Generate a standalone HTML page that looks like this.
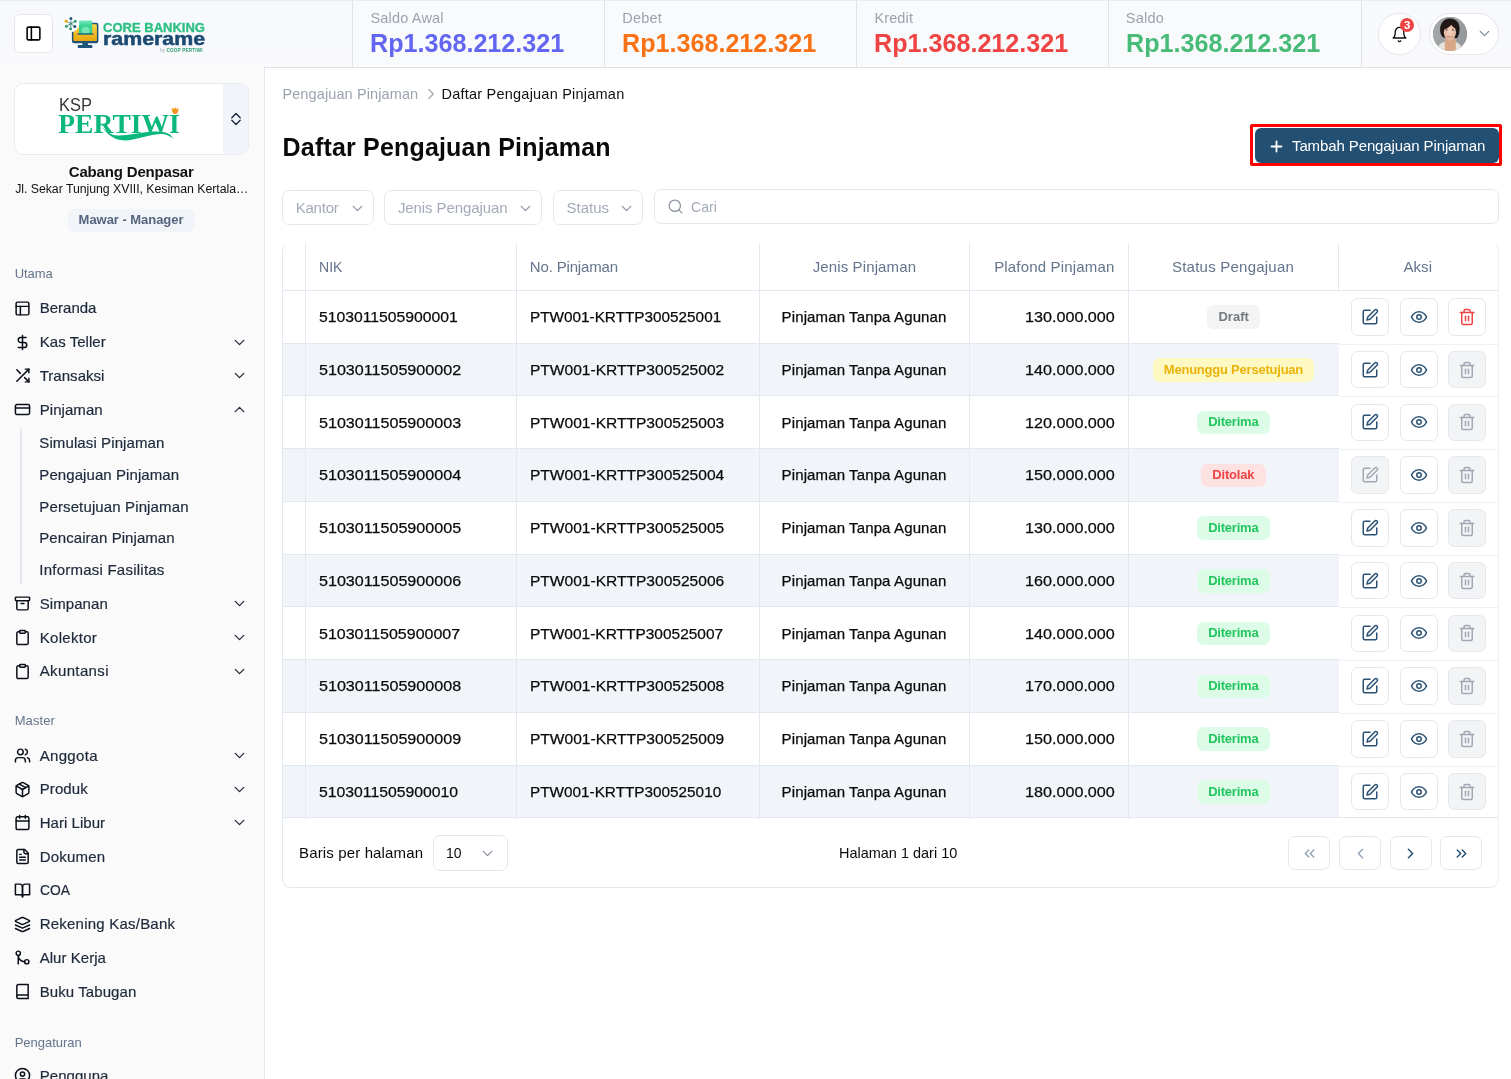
<!DOCTYPE html><html lang="id"><head><meta charset="utf-8"><title>Daftar Pengajuan Pinjaman</title><style>
*{box-sizing:border-box;margin:0;padding:0}
html,body{width:1511px;height:1079px;overflow:hidden}
body{background:#fafafa;font-family:"Liberation Sans",sans-serif;color:#1e293b;position:relative;font-size:15px}
#root{position:absolute;left:0;top:0;width:1511px;height:1079px;overflow:hidden;will-change:transform}
.ic{display:block;flex:none}
.abs{position:absolute}
.t{white-space:nowrap}
.topline{left:0;top:0;width:1511px;height:1px;background:#ebecef}
.hdrbg{left:0;top:0;width:1511px;height:90px;background:linear-gradient(#f8f9fc 0,#f8f9fc 45px,#fafafa 90px)}
.toggle{left:14px;top:14px;width:38.5px;height:38.5px;border:1px solid #e5e7eb;border-radius:5.500px;background:#fff;display:flex;align-items:center;justify-content:center;color:#000}
.stat{top:0;height:67.5px;width:253px;border-left:1px solid #dfe3e8;background:#f9fafb}
.stat.last{border-right:1px solid #dfe3e8}
.bell{left:1378.400px;top:12.600px;width:42.400px;height:42.400px;border-radius:50%;background:#fff;border:1px solid #e5e7eb;color:#111}
.badge3{left:20.600px;top:4.500px;width:14.200px;height:14.200px;border-radius:50%;background:#ef4444;color:#fff;font-size:11.500px;font-weight:700;text-align:center;line-height:14px}
.user{left:1429.400px;top:12.600px;width:69.500px;height:42.400px;border-radius:22px;background:#fff;border:1px solid #e5e7eb}
.avatar{left:3.100px;top:3.800px;width:34px;height:34px;border-radius:50%;overflow:hidden;background:#8e8e8e}
.brand{left:13.500px;top:83px;width:235.500px;height:71.500px;border:1px solid #e8ebf0;border-radius:9px;background:#fff;overflow:hidden}
.brand .sw{position:absolute;right:0;top:0;width:25.500px;height:100%;background:#f1f5f9}
.role{left:68px;top:209px;width:127px;height:22.500px;border-radius:6px;background:#f1f5f9}
.subline{left:20px;top:428px;width:2px;height:156px;background:#e5e8ee}
.main{left:264px;top:67px;width:1247px;height:1012px;background:#fff;border-left:1px solid #e2e8f0;border-top:1px solid #dfe3e8}

.addwrap{left:1250px;top:124px;width:252px;height:42px;border:3px solid #fe0000;border-radius:2px}
.addbtn{left:1255px;top:128.200px;width:244.200px;height:35px;background:#234f72;border-radius:6px;color:#fff}
.flt{top:189.200px;height:35.300px;border:1px solid #e5e7eb;border-radius:7px;background:#fff}
.tbl{left:282px;top:242px;width:1217px;height:646px;border:1px solid #e2e8f0;border-top-color:transparent;border-right-color:#eceff3;border-radius:9px;background:#fff;overflow:hidden}
.vs{top:0;width:1px;height:576px;background:#e5e9ef}
.hs{left:0;width:1056px;height:1px;background:#e2e8f0}
.hs2{left:1056px;width:160px;height:1px;background:#eef1f5}
.row{left:0;width:1056px;height:52.8px}
.row.alt{background:#f1f5f9}
.bdg{height:23.500px;border-radius:6.500px}
.ab{width:37.500px;height:37.500px;border:1px solid #e5e7eb;border-radius:6.500px;background:#fff;display:flex;align-items:center;justify-content:center;color:#2b5275}
.ab.dis{background:#f3f4f6;color:#a1a7b3}
.pg{top:593px;width:42px;height:34px;border:1px solid #e5e7eb;border-radius:7px;background:#fff;display:flex;align-items:center;justify-content:center}
</style></head><body><div id="root">
<div class="abs hdrbg"></div>
<div class="abs toggle"><svg class="ic " style="width:17px;height:17px;" viewBox="0 0 24 24" fill="none" stroke="currentColor" stroke-width="2.2" stroke-linecap="round" stroke-linejoin="round"><rect width="18" height="18" x="3" y="3" rx="2"/><path d="M9 3v18"/></svg></div>
<svg class="abs" style="left:60px;top:12px" width="44" height="44" viewBox="60 12 44 44">
<defs><linearGradient id="lg1" x1="0" y1="0" x2="0" y2="1"><stop offset="0" stop-color="#f8d743"/><stop offset="1" stop-color="#e8a50c"/></linearGradient>
<linearGradient id="lg2" x1="0" y1="0" x2="0" y2="1"><stop offset="0" stop-color="#7eeabf"/><stop offset="0.35" stop-color="#3ed396"/><stop offset="1" stop-color="#35cc8d"/></linearGradient></defs>
<rect x="71.900" y="22.800" width="26.500" height="20.400" rx="2.200" fill="#1d5479"/>
<rect x="73.400" y="24.300" width="23.500" height="16.800" rx="1.200" fill="url(#lg1)"/>
<rect x="82.400" y="42.800" width="5.500" height="3" fill="#1d5479"/><rect x="77.700" y="45" width="14.700" height="3" rx="1" fill="#1d5479"/>
<rect x="79" y="20.400" width="13.200" height="13.600" rx="1" fill="url(#lg2)"/>
<circle cx="85.600" cy="30.600" r="3.900" fill="#74e3b5"/>
<rect x="79" y="33" width="13.200" height="1.400" fill="#2fb57f"/>
<rect x="77" y="33.500" width="16.600" height="1.100" fill="#1d5479"/>
<circle cx="70.800" cy="23.700" r="8.500" fill="#fdfefe"/>
<g><circle cx="70.900" cy="18.600" r="1.500" fill="#1f4e79"/><circle cx="75.200" cy="21.300" r="1.500" fill="#2a9d6f"/><circle cx="74.800" cy="26.400" r="1.500" fill="#1f4e79"/><circle cx="70.600" cy="28.800" r="1.500" fill="#2a9d6f"/><circle cx="66.400" cy="26.200" r="1.500" fill="#2a9d6f"/><circle cx="66.200" cy="21.200" r="1.600" fill="#e9a81c"/>
<path d="M70.900 20.500v3.200M73.800 22.200l-2.900 1.500M73.600 25.800l-2.700-2.100M70.700 27.200l.2-3.500M67.800 25.500l3.100-1.800M67.800 22l3.100 1.700" stroke="#2a7d6f" stroke-width="0.900" fill="none"/></g>
</svg>
<div class="abs t" style="left:102.60px;top:20.70px;font-size:12.4px;line-height:14px;transform:scaleX(1.0509);transform-origin:0 50%;color:#2fbf84;font-weight:700;-webkit-text-stroke:0.35px #2fbf84;">CORE BANKING</div>
<div class="abs t" style="left:102.70px;top:27.60px;font-size:18.2px;line-height:22px;transform:scaleX(1.1736);transform-origin:0 50%;color:#1b4a72;font-weight:700;-webkit-text-stroke:0.5px #1b4a72;">ramerame</div>
<div class="abs t" style="left:160.30px;top:47.60px;font-size:4.5px;line-height:6px;letter-spacing:-0.048px;color:#94a3b8;">by</div>
<div class="abs t" style="left:166.50px;top:47.60px;font-size:4.6px;line-height:6px;letter-spacing:0.200px;color:#2a9d6f;font-weight:700;">COOP PERTIWI</div>
<div class="abs stat" style="left:352px"></div>
<div class="abs t" style="left:370.40px;top:7.50px;font-size:14.5px;line-height:20px;letter-spacing:0.191px;color:#9ca3af;">Saldo Awal</div>
<div class="abs t" style="left:370.40px;top:28.00px;font-size:26px;line-height:30px;transform:scaleX(0.9668);transform-origin:0 50%;color:#6366f1;font-weight:700;">Rp1.368.212.321</div>
<div class="abs stat" style="left:604px"></div>
<div class="abs t" style="left:622.30px;top:7.50px;font-size:14.5px;line-height:20px;letter-spacing:0.196px;color:#9ca3af;">Debet</div>
<div class="abs t" style="left:622.40px;top:28.00px;font-size:26px;line-height:30px;transform:scaleX(0.9668);transform-origin:0 50%;color:#f97316;font-weight:700;">Rp1.368.212.321</div>
<div class="abs stat" style="left:856px"></div>
<div class="abs t" style="left:874.40px;top:7.50px;font-size:14.5px;line-height:20px;letter-spacing:0.131px;color:#9ca3af;">Kredit</div>
<div class="abs t" style="left:874.40px;top:28.00px;font-size:26px;line-height:30px;transform:scaleX(0.9668);transform-origin:0 50%;color:#ef4444;font-weight:700;">Rp1.368.212.321</div>
<div class="abs stat last" style="left:1108px;width:254.200px"></div>
<div class="abs t" style="left:1125.80px;top:7.50px;font-size:14.5px;line-height:20px;letter-spacing:0.245px;color:#9ca3af;">Saldo</div>
<div class="abs t" style="left:1126.40px;top:28.00px;font-size:26px;line-height:30px;transform:scaleX(0.9668);transform-origin:0 50%;color:#48bb78;font-weight:700;">Rp1.368.212.321</div>
<div class="abs bell"><div class="abs" style="left:11.700px;top:12px"><svg class="ic " style="width:17px;height:17px;" viewBox="0 0 24 24" fill="none" stroke="currentColor" stroke-width="1.9" stroke-linecap="round" stroke-linejoin="round"><path d="M6 8a6 6 0 0 1 12 0c0 7 3 9 3 9H3s3-2 3-9"/><path d="M10.3 21a1.94 1.94 0 0 0 3.4 0"/></svg></div><div class="abs badge3">3</div></div>
<div class="abs user"><div class="abs avatar"><svg viewBox="0 0 34 34" width="34" height="34"><defs><linearGradient id="ag" x1="0" y1="0" x2="1" y2="0"><stop offset="0" stop-color="#a2a7a9"/><stop offset="1" stop-color="#96999b"/></linearGradient><radialGradient id="fg" cx="0.5" cy="0.45" r="0.6"><stop offset="0" stop-color="#f3d3c0"/><stop offset="1" stop-color="#dcae95"/></radialGradient></defs><rect width="34" height="34" fill="url(#ag)"/>
<path d="M4 34c.5-5 3-8 8-9.500h10c4 1.500 7 4.500 7.500 9.500z" fill="#e6e3de"/>
<path d="M11.800 22h11v12h-11z" fill="#d9a787"/>
<path d="M7.200 14.500c-.8-7 3-13 9.800-13s10.500 5 9.500 12.500c-.3 3-1.200 5.500-2.600 7l-13.400-.500c-1.800-1.200-3-3.300-3.300-6z" fill="#211816"/>
<ellipse cx="16.900" cy="15.300" rx="6.100" ry="8.200" fill="url(#fg)"/>
<path d="M10.600 12.500c.6-4 3.500-6 6.800-6 3 0 5.200 1.700 5.800 5.200-2.200-.8-4-2.300-5-4-1.600 2.300-4.300 4-7.600 4.800z" fill="#211816"/>
<ellipse cx="13.500" cy="12.800" rx="1.300" ry=".6" fill="#4a3a36"/><ellipse cx="19.900" cy="12.800" rx="1.300" ry=".6" fill="#4a3a36"/>
<path d="M13.900 18.800c1.800 1 4 1 5.800 0-.8 2-5 2-5.800 0z" fill="#c4514f"/><path d="M14.600 19.100c1.500.5 3 .5 4.400 0-.9 1-3.500 1-4.400 0z" fill="#fff"/>
<path d="M24.600 12.500c1 2.500 .6 6-1 8.300l-.8-.6c1.200-2 1.500-5 .8-7.300z" fill="#1b1b1d"/>
</svg></div><div class="abs" style="left:45.200px;top:11.600px;color:#7b8aa0"><svg class="ic " style="width:17px;height:17px;" viewBox="0 0 24 24" fill="none" stroke="currentColor" stroke-width="1.8" stroke-linecap="round" stroke-linejoin="round"><path d="m6 9 6 6 6-6"/></svg></div></div>
<div class="abs brand"><div class="sw"></div></div>
<div class="abs t" style="left:59.30px;top:94.60px;font-size:18px;line-height:20px;transform:scaleX(0.9139);transform-origin:0 50%;color:#383838;">KSP</div>
<div class="abs t" style="left:58.20px;top:109.10px;font-size:27.5px;line-height:30px;letter-spacing:0.054px;color:#0bb87c;font-weight:700;font-family:'Liberation Serif',serif;">PERTIWI</div>
<svg class="abs" style="left:95px;top:100px" width="90" height="45" viewBox="95 100 90 45"><path d="M101.900 126.600C106 131 110 135.500 118 135.600C128 135.800 140 132.500 152 131.600C160 131 166 131.500 170 134.500L173.700 138.700C170 136 166 133.800 160 134C150 134.500 138 139.500 126 140.400C116 141 108 136 101.900 126.600Z" fill="#0bb87c"/><path d="M175.100 107.200l1.300 1.900 2.300-1.200-.7 3.400c-.3 1.600-1.400 2.900-2.900 3-1.500-.1-2.600-1.400-2.900-3l-.7-3.400 2.300 1.200z" fill="#f7941d"/></svg>
<svg class="abs" style="left:229.700px;top:112px" width="12" height="14" viewBox="0 0 12 14" fill="none" stroke="#1e293b" stroke-width="1.400" stroke-linecap="round" stroke-linejoin="round"><path d="M1.800 5.700 6 1.500l4.200 4.200"/><path d="M1.800 8.300 6 12.500l4.200-4.200"/></svg>
<div class="abs t" style="left:68.80px;top:161.90px;font-size:15px;line-height:20px;letter-spacing:-0.177px;color:#111;font-weight:700;">Cabang Denpasar</div>
<div class="abs t" style="left:15.20px;top:181.40px;font-size:12.3px;line-height:16px;letter-spacing:-0.032px;color:#111;">Jl. Sekar Tunjung XVIII, Kesiman Kertala…</div>
<div class="abs role"></div>
<div class="abs t" style="left:78.60px;top:212.10px;font-size:13px;line-height:16px;letter-spacing:-0.042px;color:#55657e;font-weight:700;">Mawar - Manager</div>
<div class="abs t" style="left:14.70px;top:266.30px;font-size:13px;line-height:16px;letter-spacing:-0.088px;color:#64748b;">Utama</div>
<div class="abs" style="left:14px;top:299.8px;color:#0b0f19"><svg class="ic " style="width:17px;height:17px;" viewBox="0 0 24 24" fill="none" stroke="currentColor" stroke-width="2.1" stroke-linecap="round" stroke-linejoin="round"><rect width="18" height="18" x="3" y="3" rx="2"/><path d="M3 9h18"/><path d="M9 21V9"/></svg></div>
<div class="abs t" style="left:39.70px;top:298.30px;font-size:15px;line-height:20px;letter-spacing:0.004px;color:#1e293b;-webkit-text-stroke:0.2px #1e293b;">Beranda</div>
<div class="abs" style="left:14px;top:333.5px;color:#0b0f19"><svg class="ic " style="width:17px;height:17px;" viewBox="0 0 24 24" fill="none" stroke="currentColor" stroke-width="2.1" stroke-linecap="round" stroke-linejoin="round"><path d="M12 2v20"/><path d="M17 5H9.5a3.5 3.5 0 0 0 0 7h5a3.5 3.5 0 0 1 0 7H6"/></svg></div>
<div class="abs t" style="left:39.70px;top:332.00px;font-size:15px;line-height:20px;letter-spacing:0.053px;color:#1e293b;-webkit-text-stroke:0.2px #1e293b;">Kas Teller</div>
<div class="abs" style="left:231.200px;top:333.5px;color:#1e293b"><svg class="ic " style="width:17px;height:17px;" viewBox="0 0 24 24" fill="none" stroke="currentColor" stroke-width="1.8" stroke-linecap="round" stroke-linejoin="round"><path d="m6 9 6 6 6-6"/></svg></div>
<div class="abs" style="left:14px;top:367.3px;color:#0b0f19"><svg class="ic " style="width:17px;height:17px;" viewBox="0 0 24 24" fill="none" stroke="currentColor" stroke-width="2.1" stroke-linecap="round" stroke-linejoin="round"><path d="M16 3h5v5"/><path d="M4 20 21 3"/><path d="M21 16v5h-5"/><path d="m15 15 6 6"/><path d="m4 4 5 5"/></svg></div>
<div class="abs t" style="left:39.70px;top:365.80px;font-size:15px;line-height:20px;letter-spacing:0.037px;color:#1e293b;-webkit-text-stroke:0.2px #1e293b;">Transaksi</div>
<div class="abs" style="left:231.200px;top:367.3px;color:#1e293b"><svg class="ic " style="width:17px;height:17px;" viewBox="0 0 24 24" fill="none" stroke="currentColor" stroke-width="1.8" stroke-linecap="round" stroke-linejoin="round"><path d="m6 9 6 6 6-6"/></svg></div>
<div class="abs" style="left:14px;top:401.1px;color:#0b0f19"><svg class="ic " style="width:17px;height:17px;" viewBox="0 0 24 24" fill="none" stroke="currentColor" stroke-width="2.1" stroke-linecap="round" stroke-linejoin="round"><rect width="20" height="14" x="2" y="5" rx="2"/><path d="M2 10h20"/></svg></div>
<div class="abs t" style="left:39.70px;top:399.60px;font-size:15px;line-height:20px;letter-spacing:0.064px;color:#1e293b;-webkit-text-stroke:0.2px #1e293b;">Pinjaman</div>
<div class="abs" style="left:231.200px;top:401.1px;color:#1e293b"><svg class="ic " style="width:17px;height:17px;" viewBox="0 0 24 24" fill="none" stroke="currentColor" stroke-width="1.8" stroke-linecap="round" stroke-linejoin="round"><path d="m18 15-6-6-6 6"/></svg></div>
<div class="abs subline"></div>
<div class="abs t" style="left:39.30px;top:433.20px;font-size:15px;line-height:20px;letter-spacing:0.108px;color:#1e293b;-webkit-text-stroke:0.2px #1e293b;">Simulasi Pinjaman</div>
<div class="abs t" style="left:39.30px;top:464.90px;font-size:15px;line-height:20px;letter-spacing:0.079px;color:#1e293b;-webkit-text-stroke:0.2px #1e293b;">Pengajuan Pinjaman</div>
<div class="abs t" style="left:39.30px;top:496.60px;font-size:15px;line-height:20px;letter-spacing:0.128px;color:#1e293b;-webkit-text-stroke:0.2px #1e293b;">Persetujuan Pinjaman</div>
<div class="abs t" style="left:39.30px;top:528.30px;font-size:15px;line-height:20px;letter-spacing:0.062px;color:#1e293b;-webkit-text-stroke:0.2px #1e293b;">Pencairan Pinjaman</div>
<div class="abs t" style="left:39.30px;top:559.80px;font-size:15px;line-height:20px;letter-spacing:0.233px;color:#1e293b;-webkit-text-stroke:0.2px #1e293b;">Informasi Fasilitas</div>
<div class="abs" style="left:14px;top:595.2px;color:#0b0f19"><svg class="ic " style="width:17px;height:17px;" viewBox="0 0 24 24" fill="none" stroke="currentColor" stroke-width="2.1" stroke-linecap="round" stroke-linejoin="round"><rect width="20" height="5" x="2" y="3" rx="1"/><path d="M4 8v11a2 2 0 0 0 2 2h12a2 2 0 0 0 2-2V8"/><path d="M10 12h4"/></svg></div>
<div class="abs t" style="left:39.70px;top:593.70px;font-size:15px;line-height:20px;letter-spacing:0.075px;color:#1e293b;-webkit-text-stroke:0.2px #1e293b;">Simpanan</div>
<div class="abs" style="left:231.200px;top:595.2px;color:#1e293b"><svg class="ic " style="width:17px;height:17px;" viewBox="0 0 24 24" fill="none" stroke="currentColor" stroke-width="1.8" stroke-linecap="round" stroke-linejoin="round"><path d="m6 9 6 6 6-6"/></svg></div>
<div class="abs" style="left:14px;top:629.0px;color:#0b0f19"><svg class="ic " style="width:17px;height:17px;" viewBox="0 0 24 24" fill="none" stroke="currentColor" stroke-width="2.1" stroke-linecap="round" stroke-linejoin="round"><rect width="8" height="4" x="8" y="2" rx="1" ry="1"/><path d="M16 4h2a2 2 0 0 1 2 2v14a2 2 0 0 1-2 2H6a2 2 0 0 1-2-2V6a2 2 0 0 1 2-2h2"/></svg></div>
<div class="abs t" style="left:39.70px;top:627.50px;font-size:15px;line-height:20px;letter-spacing:0.307px;color:#1e293b;-webkit-text-stroke:0.2px #1e293b;">Kolektor</div>
<div class="abs" style="left:231.200px;top:629.0px;color:#1e293b"><svg class="ic " style="width:17px;height:17px;" viewBox="0 0 24 24" fill="none" stroke="currentColor" stroke-width="1.8" stroke-linecap="round" stroke-linejoin="round"><path d="m6 9 6 6 6-6"/></svg></div>
<div class="abs" style="left:14px;top:662.5px;color:#0b0f19"><svg class="ic " style="width:17px;height:17px;" viewBox="0 0 24 24" fill="none" stroke="currentColor" stroke-width="2.1" stroke-linecap="round" stroke-linejoin="round"><rect width="8" height="4" x="8" y="2" rx="1" ry="1"/><path d="M16 4h2a2 2 0 0 1 2 2v14a2 2 0 0 1-2 2H6a2 2 0 0 1-2-2V6a2 2 0 0 1 2-2h2"/></svg></div>
<div class="abs t" style="left:39.70px;top:661.00px;font-size:15px;line-height:20px;letter-spacing:0.369px;color:#1e293b;-webkit-text-stroke:0.2px #1e293b;">Akuntansi</div>
<div class="abs" style="left:231.200px;top:662.5px;color:#1e293b"><svg class="ic " style="width:17px;height:17px;" viewBox="0 0 24 24" fill="none" stroke="currentColor" stroke-width="1.8" stroke-linecap="round" stroke-linejoin="round"><path d="m6 9 6 6 6-6"/></svg></div>
<div class="abs t" style="left:14.70px;top:713.30px;font-size:13px;line-height:16px;letter-spacing:0.097px;color:#64748b;">Master</div>
<div class="abs" style="left:14px;top:747.0px;color:#0b0f19"><svg class="ic " style="width:17px;height:17px;" viewBox="0 0 24 24" fill="none" stroke="currentColor" stroke-width="2.1" stroke-linecap="round" stroke-linejoin="round"><path d="M16 21v-2a4 4 0 0 0-4-4H6a4 4 0 0 0-4 4v2"/><circle cx="9" cy="7" r="4"/><path d="M22 21v-2a4 4 0 0 0-3-3.87"/><path d="M16 3.13a4 4 0 0 1 0 7.75"/></svg></div>
<div class="abs t" style="left:39.70px;top:745.50px;font-size:15px;line-height:20px;letter-spacing:0.325px;color:#1e293b;-webkit-text-stroke:0.2px #1e293b;">Anggota</div>
<div class="abs" style="left:231.200px;top:747.0px;color:#1e293b"><svg class="ic " style="width:17px;height:17px;" viewBox="0 0 24 24" fill="none" stroke="currentColor" stroke-width="1.8" stroke-linecap="round" stroke-linejoin="round"><path d="m6 9 6 6 6-6"/></svg></div>
<div class="abs" style="left:14px;top:780.6px;color:#0b0f19"><svg class="ic " style="width:17px;height:17px;" viewBox="0 0 24 24" fill="none" stroke="currentColor" stroke-width="2.1" stroke-linecap="round" stroke-linejoin="round"><path d="m7.5 4.27 9 5.15"/><path d="M21 8a2 2 0 0 0-1-1.73l-7-4a2 2 0 0 0-2 0l-7 4A2 2 0 0 0 3 8v8a2 2 0 0 0 1 1.73l7 4a2 2 0 0 0 2 0l7-4A2 2 0 0 0 21 16Z"/><path d="m3.3 7 8.7 5 8.7-5"/><path d="M12 22V12"/></svg></div>
<div class="abs t" style="left:39.70px;top:779.10px;font-size:15px;line-height:20px;letter-spacing:0.115px;color:#1e293b;-webkit-text-stroke:0.2px #1e293b;">Produk</div>
<div class="abs" style="left:231.200px;top:780.6px;color:#1e293b"><svg class="ic " style="width:17px;height:17px;" viewBox="0 0 24 24" fill="none" stroke="currentColor" stroke-width="1.8" stroke-linecap="round" stroke-linejoin="round"><path d="m6 9 6 6 6-6"/></svg></div>
<div class="abs" style="left:14px;top:814.3px;color:#0b0f19"><svg class="ic " style="width:17px;height:17px;" viewBox="0 0 24 24" fill="none" stroke="currentColor" stroke-width="2.1" stroke-linecap="round" stroke-linejoin="round"><path d="M8 2v4"/><path d="M16 2v4"/><rect width="18" height="18" x="3" y="4" rx="2"/><path d="M3 10h18"/></svg></div>
<div class="abs t" style="left:39.70px;top:812.80px;font-size:15px;line-height:20px;letter-spacing:0.042px;color:#1e293b;-webkit-text-stroke:0.2px #1e293b;">Hari Libur</div>
<div class="abs" style="left:231.200px;top:814.3px;color:#1e293b"><svg class="ic " style="width:17px;height:17px;" viewBox="0 0 24 24" fill="none" stroke="currentColor" stroke-width="1.8" stroke-linecap="round" stroke-linejoin="round"><path d="m6 9 6 6 6-6"/></svg></div>
<div class="abs" style="left:14px;top:848.2px;color:#0b0f19"><svg class="ic " style="width:17px;height:17px;" viewBox="0 0 24 24" fill="none" stroke="currentColor" stroke-width="2.1" stroke-linecap="round" stroke-linejoin="round"><path d="M15 2H6a2 2 0 0 0-2 2v16a2 2 0 0 0 2 2h12a2 2 0 0 0 2-2V7Z"/><path d="M14 2v4a2 2 0 0 0 2 2h4"/><path d="M10 9H8"/><path d="M16 13H8"/><path d="M16 17H8"/></svg></div>
<div class="abs t" style="left:39.70px;top:846.70px;font-size:15px;line-height:20px;letter-spacing:0.200px;color:#1e293b;-webkit-text-stroke:0.2px #1e293b;">Dokumen</div>
<div class="abs" style="left:14px;top:881.9px;color:#0b0f19"><svg class="ic " style="width:17px;height:17px;" viewBox="0 0 24 24" fill="none" stroke="currentColor" stroke-width="2.1" stroke-linecap="round" stroke-linejoin="round"><path d="M2 3h6a4 4 0 0 1 4 4v14a3 3 0 0 0-3-3H2z"/><path d="M22 3h-6a4 4 0 0 0-4 4v14a3 3 0 0 1 3-3h7z"/></svg></div>
<div class="abs t" style="left:39.70px;top:880.40px;font-size:15px;line-height:20px;transform:scaleX(0.9217);transform-origin:0 50%;color:#1e293b;-webkit-text-stroke:0.2px #1e293b;">COA</div>
<div class="abs" style="left:14px;top:915.5px;color:#0b0f19"><svg class="ic " style="width:17px;height:17px;" viewBox="0 0 24 24" fill="none" stroke="currentColor" stroke-width="2.1" stroke-linecap="round" stroke-linejoin="round"><path d="m12.83 2.18a2 2 0 0 0-1.66 0L2.6 6.08a1 1 0 0 0 0 1.83l8.58 3.91a2 2 0 0 0 1.66 0l8.58-3.9a1 1 0 0 0 0-1.83Z"/><path d="m22 17.65-9.17 4.16a2 2 0 0 1-1.66 0L2 17.65"/><path d="m22 12.65-9.17 4.16a2 2 0 0 1-1.66 0L2 12.65"/></svg></div>
<div class="abs t" style="left:39.70px;top:914.00px;font-size:15px;line-height:20px;letter-spacing:0.222px;color:#1e293b;-webkit-text-stroke:0.2px #1e293b;">Rekening Kas/Bank</div>
<div class="abs" style="left:14px;top:949.3px;color:#0b0f19"><svg class="ic " style="width:17px;height:17px;" viewBox="0 0 24 24" fill="none" stroke="currentColor" stroke-width="2.1" stroke-linecap="round" stroke-linejoin="round"><circle cx="18" cy="18" r="3"/><circle cx="6" cy="6" r="3"/><path d="M6 21V9a9 9 0 0 0 9 9"/></svg></div>
<div class="abs t" style="left:39.70px;top:947.80px;font-size:15px;line-height:20px;letter-spacing:0.042px;color:#1e293b;-webkit-text-stroke:0.2px #1e293b;">Alur Kerja</div>
<div class="abs" style="left:14px;top:983.1px;color:#0b0f19"><svg class="ic " style="width:17px;height:17px;" viewBox="0 0 24 24" fill="none" stroke="currentColor" stroke-width="2.1" stroke-linecap="round" stroke-linejoin="round"><path d="M4 19.5v-15A2.5 2.5 0 0 1 6.5 2H20v20H6.5a2.5 2.5 0 0 1 0-5H20"/></svg></div>
<div class="abs t" style="left:39.70px;top:981.60px;font-size:15px;line-height:20px;letter-spacing:0.089px;color:#1e293b;-webkit-text-stroke:0.2px #1e293b;">Buku Tabugan</div>
<div class="abs t" style="left:14.70px;top:1034.60px;font-size:13px;line-height:16px;letter-spacing:-0.012px;color:#64748b;">Pengaturan</div>
<div class="abs" style="left:14px;top:1067.1px;color:#0b0f19"><svg class="ic " style="width:17px;height:17px;" viewBox="0 0 24 24" fill="none" stroke="currentColor" stroke-width="2.1" stroke-linecap="round" stroke-linejoin="round"><circle cx="12" cy="12" r="10"/><circle cx="12" cy="10" r="3"/><path d="M7 20.662V19a2 2 0 0 1 2-2h6a2 2 0 0 1 2 2v1.662"/></svg></div>
<div class="abs t" style="left:39.70px;top:1065.60px;font-size:15px;line-height:20px;letter-spacing:0.046px;color:#1e293b;-webkit-text-stroke:0.2px #1e293b;">Pengguna</div>
<div class="abs main"></div>
<div class="abs t" style="left:282.40px;top:84.00px;font-size:14.5px;line-height:20px;letter-spacing:0.116px;color:#9ca3af;">Pengajuan Pinjaman</div>
<div class="abs" style="left:421.600px;top:85.200px;color:#9ca3af"><svg class="ic " style="width:18px;height:18px;" viewBox="0 0 24 24" fill="none" stroke="currentColor" stroke-width="1.5" stroke-linecap="round" stroke-linejoin="round"><path d="m9 18 6-6-6-6"/></svg></div>
<div class="abs t" style="left:441.50px;top:84.00px;font-size:14.5px;line-height:20px;letter-spacing:0.224px;color:#111;">Daftar Pengajuan Pinjaman</div>
<div class="abs t" style="left:282.60px;top:130.60px;font-size:25px;line-height:32px;letter-spacing:0.181px;color:#0a0a0a;font-weight:700;">Daftar Pengajuan Pinjaman</div>
<div class="abs addbtn"><div class="abs" style="left:12.500px;top:9.500px"><svg class="ic " style="width:17px;height:17px;" viewBox="0 0 24 24" fill="none" stroke="currentColor" stroke-width="2.6" stroke-linecap="round" stroke-linejoin="round"><path d="M5 12h14"/><path d="M12 5v14"/></svg></div></div>
<div class="abs t" style="left:1292.00px;top:136.40px;font-size:15px;line-height:20px;letter-spacing:-0.111px;color:#fff;">Tambah Pengajuan Pinjaman</div>
<div class="abs addwrap"></div>
<div class="abs flt" style="left:282px;width:91.5px;top:190.200px"></div>
<div class="abs t" style="left:295.70px;top:198.10px;font-size:15px;line-height:20px;letter-spacing:-0.215px;color:#a3aab8;">Kantor</div>
<div class="abs" style="left:348.5px;top:199.8px;color:#8b93a3"><svg class="ic " style="width:17px;height:17px;" viewBox="0 0 24 24" fill="none" stroke="currentColor" stroke-width="1.8" stroke-linecap="round" stroke-linejoin="round"><path d="m6 9 6 6 6-6"/></svg></div>
<div class="abs flt" style="left:384.4px;width:157.5px;top:190.200px"></div>
<div class="abs t" style="left:397.90px;top:198.10px;font-size:15px;line-height:20px;letter-spacing:-0.095px;color:#a3aab8;">Jenis Pengajuan</div>
<div class="abs" style="left:517.0px;top:199.8px;color:#8b93a3"><svg class="ic " style="width:17px;height:17px;" viewBox="0 0 24 24" fill="none" stroke="currentColor" stroke-width="1.8" stroke-linecap="round" stroke-linejoin="round"><path d="m6 9 6 6 6-6"/></svg></div>
<div class="abs flt" style="left:553.2px;width:90.3px;top:190.200px"></div>
<div class="abs t" style="left:566.50px;top:198.10px;font-size:15px;line-height:20px;letter-spacing:-0.005px;color:#a3aab8;">Status</div>
<div class="abs" style="left:618.1px;top:199.8px;color:#8b93a3"><svg class="ic " style="width:17px;height:17px;" viewBox="0 0 24 24" fill="none" stroke="currentColor" stroke-width="1.8" stroke-linecap="round" stroke-linejoin="round"><path d="m6 9 6 6 6-6"/></svg></div>
<div class="abs flt" style="left:654.300px;width:844.500px"></div>
<div class="abs" style="left:666.500px;top:198.400px;color:#8b93a3"><svg class="ic " style="width:17px;height:17px;" viewBox="0 0 24 24" fill="none" stroke="currentColor" stroke-width="1.8" stroke-linecap="round" stroke-linejoin="round"><circle cx="11" cy="11" r="8"/><path d="m21 21-4.3-4.3"/></svg></div>
<div class="abs t" style="left:690.60px;top:197.30px;font-size:15px;line-height:20px;transform:scaleX(0.9373);transform-origin:0 50%;color:#a3aab8;">Cari</div>
<div class="abs tbl">
<div class="abs row" style="top:47.90px"></div>
<div class="abs row alt" style="top:100.65px"></div>
<div class="abs row" style="top:153.40px"></div>
<div class="abs row alt" style="top:206.15px"></div>
<div class="abs row" style="top:258.90px"></div>
<div class="abs row alt" style="top:311.65px"></div>
<div class="abs row" style="top:364.40px"></div>
<div class="abs row alt" style="top:417.15px"></div>
<div class="abs row" style="top:469.90px"></div>
<div class="abs row alt" style="top:522.65px"></div>
<div class="abs hs" style="top:46.90px"></div>
<div class="abs hs" style="top:99.65px"></div>
<div class="abs hs2" style="top:100.65px"></div>
<div class="abs hs" style="top:152.40px"></div>
<div class="abs hs2" style="top:153.40px"></div>
<div class="abs hs" style="top:205.15px"></div>
<div class="abs hs2" style="top:206.15px"></div>
<div class="abs hs" style="top:257.90px"></div>
<div class="abs hs2" style="top:258.90px"></div>
<div class="abs hs" style="top:310.65px"></div>
<div class="abs hs2" style="top:311.65px"></div>
<div class="abs hs" style="top:363.40px"></div>
<div class="abs hs2" style="top:364.40px"></div>
<div class="abs hs" style="top:416.15px"></div>
<div class="abs hs2" style="top:417.15px"></div>
<div class="abs hs" style="top:468.90px"></div>
<div class="abs hs2" style="top:469.90px"></div>
<div class="abs hs" style="top:521.65px"></div>
<div class="abs hs2" style="top:522.65px"></div>
<div class="abs hs" style="top:574.40px"></div>
<div class="abs hs2" style="top:574.40px;background:#e2e8f0"></div>
<div class="abs hs2" style="top:46.90px;background:#e2e8f0"></div>
<div class="abs vs" style="left:22px"></div>
<div class="abs vs" style="left:233px"></div>
<div class="abs vs" style="left:476px"></div>
<div class="abs vs" style="left:686px"></div>
<div class="abs vs" style="left:845px"></div>
<div class="abs vs" style="left:1055px;height:47.5px"></div>
<div class="abs t" style="left:36.00px;top:13.50px;font-size:15px;line-height:20px;transform:scaleX(0.9369);transform-origin:0 50%;color:#64748b;">NIK</div>
<div class="abs t" style="left:246.80px;top:13.50px;font-size:15px;line-height:20px;letter-spacing:-0.161px;color:#64748b;">No. Pinjaman</div>
<div class="abs t" style="left:529.70px;top:13.50px;font-size:15px;line-height:20px;letter-spacing:0.123px;color:#64748b;">Jenis Pinjaman</div>
<div class="abs t" style="left:711.20px;top:13.50px;font-size:15px;line-height:20px;letter-spacing:0.167px;color:#64748b;">Plafond Pinjaman</div>
<div class="abs t" style="left:889.00px;top:13.50px;font-size:15px;line-height:20px;letter-spacing:0.225px;color:#64748b;">Status Pengajuan</div>
<div class="abs t" style="left:1120.40px;top:13.50px;font-size:15px;line-height:20px;letter-spacing:0.083px;color:#64748b;">Aksi</div>
<div class="abs t" style="left:35.80px;top:64.00px;font-size:15px;line-height:20px;transform:scaleX(1.0485);transform-origin:0 50%;color:#0a0a0a;-webkit-text-stroke:0.25px #0a0a0a;">5103011505900001</div>
<div class="abs t" style="left:246.80px;top:64.00px;font-size:15px;line-height:20px;transform:scaleX(1.0205);transform-origin:0 50%;color:#0a0a0a;-webkit-text-stroke:0.25px #0a0a0a;">PTW001-KRTTP300525001</div>
<div class="abs t" style="left:498.60px;top:64.00px;font-size:15px;line-height:20px;letter-spacing:0.121px;color:#0a0a0a;-webkit-text-stroke:0.25px #0a0a0a;">Pinjaman Tanpa Agunan</div>
<div class="abs t" style="left:741.50px;top:64.00px;font-size:15px;line-height:20px;transform:scaleX(1.0767);transform-origin:0 50%;color:#0a0a0a;-webkit-text-stroke:0.25px #0a0a0a;">130.000.000</div>
<div class="abs bdg" style="left:924.3px;width:52.7px;top:62.25px;background:#f4f4f5"></div>
<div class="abs t" style="left:935.50px;top:65.80px;font-size:13px;line-height:16px;letter-spacing:-0.014px;color:#737980;font-weight:700;">Draft</div>
<div class="abs ab" style="left:1068.2px;top:55.20px"><svg class="ic " style="width:18px;height:18px;" viewBox="0 0 24 24" fill="none" stroke="currentColor" stroke-width="2" stroke-linecap="round" stroke-linejoin="round"><path d="M12 3H5a2 2 0 0 0-2 2v14a2 2 0 0 0 2 2h14a2 2 0 0 0 2-2v-7"/><path d="M18.375 2.625a2.121 2.121 0 1 1 3 3L12 15l-4 1 1-4Z"/></svg></div>
<div class="abs ab" style="left:1117.0px;top:55.20px"><svg class="ic " style="width:18px;height:18px;" viewBox="0 0 24 24" fill="none" stroke="currentColor" stroke-width="2" stroke-linecap="round" stroke-linejoin="round"><path d="M2 12s3-7 10-7 10 7 10 7-3 7-10 7-10-7-10-7Z"/><circle cx="12" cy="12" r="3"/></svg></div>
<div class="abs ab" style="left:1165.2px;top:55.20px;color:#ef4444"><svg class="ic " style="width:18px;height:18px;" viewBox="0 0 24 24" fill="none" stroke="currentColor" stroke-width="2" stroke-linecap="round" stroke-linejoin="round"><path d="M3 6h18"/><path d="M19 6v14c0 1-1 2-2 2H7c-1 0-2-1-2-2V6"/><path d="M8 6V4c0-1 1-2 2-2h4c1 0 2 1 2 2v2"/><path d="M10 11v6"/><path d="M14 11v6"/></svg></div>
<div class="abs t" style="left:35.80px;top:116.75px;font-size:15px;line-height:20px;transform:scaleX(1.0735);transform-origin:0 50%;color:#0a0a0a;-webkit-text-stroke:0.25px #0a0a0a;">5103011505900002</div>
<div class="abs t" style="left:246.80px;top:116.75px;font-size:15px;line-height:20px;transform:scaleX(1.0366);transform-origin:0 50%;color:#0a0a0a;-webkit-text-stroke:0.25px #0a0a0a;">PTW001-KRTTP300525002</div>
<div class="abs t" style="left:498.60px;top:116.75px;font-size:15px;line-height:20px;letter-spacing:0.121px;color:#0a0a0a;-webkit-text-stroke:0.25px #0a0a0a;">Pinjaman Tanpa Agunan</div>
<div class="abs t" style="left:741.50px;top:116.75px;font-size:15px;line-height:20px;transform:scaleX(1.0767);transform-origin:0 50%;color:#0a0a0a;-webkit-text-stroke:0.25px #0a0a0a;">140.000.000</div>
<div class="abs bdg" style="left:869.9px;width:161.3px;top:115.00px;background:#fef9c3"></div>
<div class="abs t" style="left:880.80px;top:118.55px;font-size:13px;line-height:16px;letter-spacing:-0.222px;color:#eab308;font-weight:700;">Menunggu Persetujuan</div>
<div class="abs ab" style="left:1068.2px;top:107.95px"><svg class="ic " style="width:18px;height:18px;" viewBox="0 0 24 24" fill="none" stroke="currentColor" stroke-width="2" stroke-linecap="round" stroke-linejoin="round"><path d="M12 3H5a2 2 0 0 0-2 2v14a2 2 0 0 0 2 2h14a2 2 0 0 0 2-2v-7"/><path d="M18.375 2.625a2.121 2.121 0 1 1 3 3L12 15l-4 1 1-4Z"/></svg></div>
<div class="abs ab" style="left:1117.0px;top:107.95px"><svg class="ic " style="width:18px;height:18px;" viewBox="0 0 24 24" fill="none" stroke="currentColor" stroke-width="2" stroke-linecap="round" stroke-linejoin="round"><path d="M2 12s3-7 10-7 10 7 10 7-3 7-10 7-10-7-10-7Z"/><circle cx="12" cy="12" r="3"/></svg></div>
<div class="abs ab dis" style="left:1165.2px;top:107.95px;"><svg class="ic " style="width:18px;height:18px;" viewBox="0 0 24 24" fill="none" stroke="currentColor" stroke-width="2" stroke-linecap="round" stroke-linejoin="round"><path d="M3 6h18"/><path d="M19 6v14c0 1-1 2-2 2H7c-1 0-2-1-2-2V6"/><path d="M8 6V4c0-1 1-2 2-2h4c1 0 2 1 2 2v2"/><path d="M10 11v6"/><path d="M14 11v6"/></svg></div>
<div class="abs t" style="left:35.80px;top:169.50px;font-size:15px;line-height:20px;transform:scaleX(1.0735);transform-origin:0 50%;color:#0a0a0a;-webkit-text-stroke:0.25px #0a0a0a;">5103011505900003</div>
<div class="abs t" style="left:246.80px;top:169.50px;font-size:15px;line-height:20px;transform:scaleX(1.0366);transform-origin:0 50%;color:#0a0a0a;-webkit-text-stroke:0.25px #0a0a0a;">PTW001-KRTTP300525003</div>
<div class="abs t" style="left:498.60px;top:169.50px;font-size:15px;line-height:20px;letter-spacing:0.121px;color:#0a0a0a;-webkit-text-stroke:0.25px #0a0a0a;">Pinjaman Tanpa Agunan</div>
<div class="abs t" style="left:741.50px;top:169.50px;font-size:15px;line-height:20px;transform:scaleX(1.0767);transform-origin:0 50%;color:#0a0a0a;-webkit-text-stroke:0.25px #0a0a0a;">120.000.000</div>
<div class="abs bdg" style="left:914.1px;width:72.9px;top:167.75px;background:#dcfce7"></div>
<div class="abs t" style="left:925.20px;top:171.30px;font-size:13px;line-height:16px;letter-spacing:-0.219px;color:#22c55e;font-weight:700;">Diterima</div>
<div class="abs ab" style="left:1068.2px;top:160.70px"><svg class="ic " style="width:18px;height:18px;" viewBox="0 0 24 24" fill="none" stroke="currentColor" stroke-width="2" stroke-linecap="round" stroke-linejoin="round"><path d="M12 3H5a2 2 0 0 0-2 2v14a2 2 0 0 0 2 2h14a2 2 0 0 0 2-2v-7"/><path d="M18.375 2.625a2.121 2.121 0 1 1 3 3L12 15l-4 1 1-4Z"/></svg></div>
<div class="abs ab" style="left:1117.0px;top:160.70px"><svg class="ic " style="width:18px;height:18px;" viewBox="0 0 24 24" fill="none" stroke="currentColor" stroke-width="2" stroke-linecap="round" stroke-linejoin="round"><path d="M2 12s3-7 10-7 10 7 10 7-3 7-10 7-10-7-10-7Z"/><circle cx="12" cy="12" r="3"/></svg></div>
<div class="abs ab dis" style="left:1165.2px;top:160.70px;"><svg class="ic " style="width:18px;height:18px;" viewBox="0 0 24 24" fill="none" stroke="currentColor" stroke-width="2" stroke-linecap="round" stroke-linejoin="round"><path d="M3 6h18"/><path d="M19 6v14c0 1-1 2-2 2H7c-1 0-2-1-2-2V6"/><path d="M8 6V4c0-1 1-2 2-2h4c1 0 2 1 2 2v2"/><path d="M10 11v6"/><path d="M14 11v6"/></svg></div>
<div class="abs t" style="left:35.80px;top:222.25px;font-size:15px;line-height:20px;transform:scaleX(1.0735);transform-origin:0 50%;color:#0a0a0a;-webkit-text-stroke:0.25px #0a0a0a;">5103011505900004</div>
<div class="abs t" style="left:246.80px;top:222.25px;font-size:15px;line-height:20px;transform:scaleX(1.0366);transform-origin:0 50%;color:#0a0a0a;-webkit-text-stroke:0.25px #0a0a0a;">PTW001-KRTTP300525004</div>
<div class="abs t" style="left:498.60px;top:222.25px;font-size:15px;line-height:20px;letter-spacing:0.121px;color:#0a0a0a;-webkit-text-stroke:0.25px #0a0a0a;">Pinjaman Tanpa Agunan</div>
<div class="abs t" style="left:741.50px;top:222.25px;font-size:15px;line-height:20px;transform:scaleX(1.0767);transform-origin:0 50%;color:#0a0a0a;-webkit-text-stroke:0.25px #0a0a0a;">150.000.000</div>
<div class="abs bdg" style="left:918.0px;width:65.0px;top:220.50px;background:#fee2e2"></div>
<div class="abs t" style="left:929.30px;top:224.05px;font-size:13px;line-height:16px;letter-spacing:-0.187px;color:#ef4444;font-weight:700;">Ditolak</div>
<div class="abs ab dis" style="left:1068.2px;top:213.45px"><svg class="ic " style="width:18px;height:18px;" viewBox="0 0 24 24" fill="none" stroke="currentColor" stroke-width="2" stroke-linecap="round" stroke-linejoin="round"><path d="M12 3H5a2 2 0 0 0-2 2v14a2 2 0 0 0 2 2h14a2 2 0 0 0 2-2v-7"/><path d="M18.375 2.625a2.121 2.121 0 1 1 3 3L12 15l-4 1 1-4Z"/></svg></div>
<div class="abs ab" style="left:1117.0px;top:213.45px"><svg class="ic " style="width:18px;height:18px;" viewBox="0 0 24 24" fill="none" stroke="currentColor" stroke-width="2" stroke-linecap="round" stroke-linejoin="round"><path d="M2 12s3-7 10-7 10 7 10 7-3 7-10 7-10-7-10-7Z"/><circle cx="12" cy="12" r="3"/></svg></div>
<div class="abs ab dis" style="left:1165.2px;top:213.45px;"><svg class="ic " style="width:18px;height:18px;" viewBox="0 0 24 24" fill="none" stroke="currentColor" stroke-width="2" stroke-linecap="round" stroke-linejoin="round"><path d="M3 6h18"/><path d="M19 6v14c0 1-1 2-2 2H7c-1 0-2-1-2-2V6"/><path d="M8 6V4c0-1 1-2 2-2h4c1 0 2 1 2 2v2"/><path d="M10 11v6"/><path d="M14 11v6"/></svg></div>
<div class="abs t" style="left:35.80px;top:275.00px;font-size:15px;line-height:20px;transform:scaleX(1.0735);transform-origin:0 50%;color:#0a0a0a;-webkit-text-stroke:0.25px #0a0a0a;">5103011505900005</div>
<div class="abs t" style="left:246.80px;top:275.00px;font-size:15px;line-height:20px;transform:scaleX(1.0366);transform-origin:0 50%;color:#0a0a0a;-webkit-text-stroke:0.25px #0a0a0a;">PTW001-KRTTP300525005</div>
<div class="abs t" style="left:498.60px;top:275.00px;font-size:15px;line-height:20px;letter-spacing:0.121px;color:#0a0a0a;-webkit-text-stroke:0.25px #0a0a0a;">Pinjaman Tanpa Agunan</div>
<div class="abs t" style="left:741.50px;top:275.00px;font-size:15px;line-height:20px;transform:scaleX(1.0767);transform-origin:0 50%;color:#0a0a0a;-webkit-text-stroke:0.25px #0a0a0a;">130.000.000</div>
<div class="abs bdg" style="left:914.1px;width:72.9px;top:273.25px;background:#dcfce7"></div>
<div class="abs t" style="left:925.20px;top:276.80px;font-size:13px;line-height:16px;letter-spacing:-0.219px;color:#22c55e;font-weight:700;">Diterima</div>
<div class="abs ab" style="left:1068.2px;top:266.20px"><svg class="ic " style="width:18px;height:18px;" viewBox="0 0 24 24" fill="none" stroke="currentColor" stroke-width="2" stroke-linecap="round" stroke-linejoin="round"><path d="M12 3H5a2 2 0 0 0-2 2v14a2 2 0 0 0 2 2h14a2 2 0 0 0 2-2v-7"/><path d="M18.375 2.625a2.121 2.121 0 1 1 3 3L12 15l-4 1 1-4Z"/></svg></div>
<div class="abs ab" style="left:1117.0px;top:266.20px"><svg class="ic " style="width:18px;height:18px;" viewBox="0 0 24 24" fill="none" stroke="currentColor" stroke-width="2" stroke-linecap="round" stroke-linejoin="round"><path d="M2 12s3-7 10-7 10 7 10 7-3 7-10 7-10-7-10-7Z"/><circle cx="12" cy="12" r="3"/></svg></div>
<div class="abs ab dis" style="left:1165.2px;top:266.20px;"><svg class="ic " style="width:18px;height:18px;" viewBox="0 0 24 24" fill="none" stroke="currentColor" stroke-width="2" stroke-linecap="round" stroke-linejoin="round"><path d="M3 6h18"/><path d="M19 6v14c0 1-1 2-2 2H7c-1 0-2-1-2-2V6"/><path d="M8 6V4c0-1 1-2 2-2h4c1 0 2 1 2 2v2"/><path d="M10 11v6"/><path d="M14 11v6"/></svg></div>
<div class="abs t" style="left:35.80px;top:327.75px;font-size:15px;line-height:20px;transform:scaleX(1.0735);transform-origin:0 50%;color:#0a0a0a;-webkit-text-stroke:0.25px #0a0a0a;">5103011505900006</div>
<div class="abs t" style="left:246.80px;top:327.75px;font-size:15px;line-height:20px;transform:scaleX(1.0366);transform-origin:0 50%;color:#0a0a0a;-webkit-text-stroke:0.25px #0a0a0a;">PTW001-KRTTP300525006</div>
<div class="abs t" style="left:498.60px;top:327.75px;font-size:15px;line-height:20px;letter-spacing:0.121px;color:#0a0a0a;-webkit-text-stroke:0.25px #0a0a0a;">Pinjaman Tanpa Agunan</div>
<div class="abs t" style="left:741.50px;top:327.75px;font-size:15px;line-height:20px;transform:scaleX(1.0767);transform-origin:0 50%;color:#0a0a0a;-webkit-text-stroke:0.25px #0a0a0a;">160.000.000</div>
<div class="abs bdg" style="left:914.1px;width:72.9px;top:326.00px;background:#dcfce7"></div>
<div class="abs t" style="left:925.20px;top:329.55px;font-size:13px;line-height:16px;letter-spacing:-0.219px;color:#22c55e;font-weight:700;">Diterima</div>
<div class="abs ab" style="left:1068.2px;top:318.95px"><svg class="ic " style="width:18px;height:18px;" viewBox="0 0 24 24" fill="none" stroke="currentColor" stroke-width="2" stroke-linecap="round" stroke-linejoin="round"><path d="M12 3H5a2 2 0 0 0-2 2v14a2 2 0 0 0 2 2h14a2 2 0 0 0 2-2v-7"/><path d="M18.375 2.625a2.121 2.121 0 1 1 3 3L12 15l-4 1 1-4Z"/></svg></div>
<div class="abs ab" style="left:1117.0px;top:318.95px"><svg class="ic " style="width:18px;height:18px;" viewBox="0 0 24 24" fill="none" stroke="currentColor" stroke-width="2" stroke-linecap="round" stroke-linejoin="round"><path d="M2 12s3-7 10-7 10 7 10 7-3 7-10 7-10-7-10-7Z"/><circle cx="12" cy="12" r="3"/></svg></div>
<div class="abs ab dis" style="left:1165.2px;top:318.95px;"><svg class="ic " style="width:18px;height:18px;" viewBox="0 0 24 24" fill="none" stroke="currentColor" stroke-width="2" stroke-linecap="round" stroke-linejoin="round"><path d="M3 6h18"/><path d="M19 6v14c0 1-1 2-2 2H7c-1 0-2-1-2-2V6"/><path d="M8 6V4c0-1 1-2 2-2h4c1 0 2 1 2 2v2"/><path d="M10 11v6"/><path d="M14 11v6"/></svg></div>
<div class="abs t" style="left:35.80px;top:380.50px;font-size:15px;line-height:20px;transform:scaleX(1.0659);transform-origin:0 50%;color:#0a0a0a;-webkit-text-stroke:0.25px #0a0a0a;">5103011505900007</div>
<div class="abs t" style="left:246.80px;top:380.50px;font-size:15px;line-height:20px;transform:scaleX(1.0312);transform-origin:0 50%;color:#0a0a0a;-webkit-text-stroke:0.25px #0a0a0a;">PTW001-KRTTP300525007</div>
<div class="abs t" style="left:498.60px;top:380.50px;font-size:15px;line-height:20px;letter-spacing:0.121px;color:#0a0a0a;-webkit-text-stroke:0.25px #0a0a0a;">Pinjaman Tanpa Agunan</div>
<div class="abs t" style="left:741.50px;top:380.50px;font-size:15px;line-height:20px;transform:scaleX(1.0767);transform-origin:0 50%;color:#0a0a0a;-webkit-text-stroke:0.25px #0a0a0a;">140.000.000</div>
<div class="abs bdg" style="left:914.1px;width:72.9px;top:378.75px;background:#dcfce7"></div>
<div class="abs t" style="left:925.20px;top:382.30px;font-size:13px;line-height:16px;letter-spacing:-0.219px;color:#22c55e;font-weight:700;">Diterima</div>
<div class="abs ab" style="left:1068.2px;top:371.70px"><svg class="ic " style="width:18px;height:18px;" viewBox="0 0 24 24" fill="none" stroke="currentColor" stroke-width="2" stroke-linecap="round" stroke-linejoin="round"><path d="M12 3H5a2 2 0 0 0-2 2v14a2 2 0 0 0 2 2h14a2 2 0 0 0 2-2v-7"/><path d="M18.375 2.625a2.121 2.121 0 1 1 3 3L12 15l-4 1 1-4Z"/></svg></div>
<div class="abs ab" style="left:1117.0px;top:371.70px"><svg class="ic " style="width:18px;height:18px;" viewBox="0 0 24 24" fill="none" stroke="currentColor" stroke-width="2" stroke-linecap="round" stroke-linejoin="round"><path d="M2 12s3-7 10-7 10 7 10 7-3 7-10 7-10-7-10-7Z"/><circle cx="12" cy="12" r="3"/></svg></div>
<div class="abs ab dis" style="left:1165.2px;top:371.70px;"><svg class="ic " style="width:18px;height:18px;" viewBox="0 0 24 24" fill="none" stroke="currentColor" stroke-width="2" stroke-linecap="round" stroke-linejoin="round"><path d="M3 6h18"/><path d="M19 6v14c0 1-1 2-2 2H7c-1 0-2-1-2-2V6"/><path d="M8 6V4c0-1 1-2 2-2h4c1 0 2 1 2 2v2"/><path d="M10 11v6"/><path d="M14 11v6"/></svg></div>
<div class="abs t" style="left:35.80px;top:433.25px;font-size:15px;line-height:20px;transform:scaleX(1.0735);transform-origin:0 50%;color:#0a0a0a;-webkit-text-stroke:0.25px #0a0a0a;">5103011505900008</div>
<div class="abs t" style="left:246.80px;top:433.25px;font-size:15px;line-height:20px;transform:scaleX(1.0366);transform-origin:0 50%;color:#0a0a0a;-webkit-text-stroke:0.25px #0a0a0a;">PTW001-KRTTP300525008</div>
<div class="abs t" style="left:498.60px;top:433.25px;font-size:15px;line-height:20px;letter-spacing:0.121px;color:#0a0a0a;-webkit-text-stroke:0.25px #0a0a0a;">Pinjaman Tanpa Agunan</div>
<div class="abs t" style="left:741.50px;top:433.25px;font-size:15px;line-height:20px;transform:scaleX(1.0767);transform-origin:0 50%;color:#0a0a0a;-webkit-text-stroke:0.25px #0a0a0a;">170.000.000</div>
<div class="abs bdg" style="left:914.1px;width:72.9px;top:431.50px;background:#dcfce7"></div>
<div class="abs t" style="left:925.20px;top:435.05px;font-size:13px;line-height:16px;letter-spacing:-0.219px;color:#22c55e;font-weight:700;">Diterima</div>
<div class="abs ab" style="left:1068.2px;top:424.45px"><svg class="ic " style="width:18px;height:18px;" viewBox="0 0 24 24" fill="none" stroke="currentColor" stroke-width="2" stroke-linecap="round" stroke-linejoin="round"><path d="M12 3H5a2 2 0 0 0-2 2v14a2 2 0 0 0 2 2h14a2 2 0 0 0 2-2v-7"/><path d="M18.375 2.625a2.121 2.121 0 1 1 3 3L12 15l-4 1 1-4Z"/></svg></div>
<div class="abs ab" style="left:1117.0px;top:424.45px"><svg class="ic " style="width:18px;height:18px;" viewBox="0 0 24 24" fill="none" stroke="currentColor" stroke-width="2" stroke-linecap="round" stroke-linejoin="round"><path d="M2 12s3-7 10-7 10 7 10 7-3 7-10 7-10-7-10-7Z"/><circle cx="12" cy="12" r="3"/></svg></div>
<div class="abs ab dis" style="left:1165.2px;top:424.45px;"><svg class="ic " style="width:18px;height:18px;" viewBox="0 0 24 24" fill="none" stroke="currentColor" stroke-width="2" stroke-linecap="round" stroke-linejoin="round"><path d="M3 6h18"/><path d="M19 6v14c0 1-1 2-2 2H7c-1 0-2-1-2-2V6"/><path d="M8 6V4c0-1 1-2 2-2h4c1 0 2 1 2 2v2"/><path d="M10 11v6"/><path d="M14 11v6"/></svg></div>
<div class="abs t" style="left:35.80px;top:486.00px;font-size:15px;line-height:20px;transform:scaleX(1.0735);transform-origin:0 50%;color:#0a0a0a;-webkit-text-stroke:0.25px #0a0a0a;">5103011505900009</div>
<div class="abs t" style="left:246.80px;top:486.00px;font-size:15px;line-height:20px;transform:scaleX(1.0366);transform-origin:0 50%;color:#0a0a0a;-webkit-text-stroke:0.25px #0a0a0a;">PTW001-KRTTP300525009</div>
<div class="abs t" style="left:498.60px;top:486.00px;font-size:15px;line-height:20px;letter-spacing:0.121px;color:#0a0a0a;-webkit-text-stroke:0.25px #0a0a0a;">Pinjaman Tanpa Agunan</div>
<div class="abs t" style="left:741.50px;top:486.00px;font-size:15px;line-height:20px;transform:scaleX(1.0767);transform-origin:0 50%;color:#0a0a0a;-webkit-text-stroke:0.25px #0a0a0a;">150.000.000</div>
<div class="abs bdg" style="left:914.1px;width:72.9px;top:484.25px;background:#dcfce7"></div>
<div class="abs t" style="left:925.20px;top:487.80px;font-size:13px;line-height:16px;letter-spacing:-0.219px;color:#22c55e;font-weight:700;">Diterima</div>
<div class="abs ab" style="left:1068.2px;top:477.20px"><svg class="ic " style="width:18px;height:18px;" viewBox="0 0 24 24" fill="none" stroke="currentColor" stroke-width="2" stroke-linecap="round" stroke-linejoin="round"><path d="M12 3H5a2 2 0 0 0-2 2v14a2 2 0 0 0 2 2h14a2 2 0 0 0 2-2v-7"/><path d="M18.375 2.625a2.121 2.121 0 1 1 3 3L12 15l-4 1 1-4Z"/></svg></div>
<div class="abs ab" style="left:1117.0px;top:477.20px"><svg class="ic " style="width:18px;height:18px;" viewBox="0 0 24 24" fill="none" stroke="currentColor" stroke-width="2" stroke-linecap="round" stroke-linejoin="round"><path d="M2 12s3-7 10-7 10 7 10 7-3 7-10 7-10-7-10-7Z"/><circle cx="12" cy="12" r="3"/></svg></div>
<div class="abs ab dis" style="left:1165.2px;top:477.20px;"><svg class="ic " style="width:18px;height:18px;" viewBox="0 0 24 24" fill="none" stroke="currentColor" stroke-width="2" stroke-linecap="round" stroke-linejoin="round"><path d="M3 6h18"/><path d="M19 6v14c0 1-1 2-2 2H7c-1 0-2-1-2-2V6"/><path d="M8 6V4c0-1 1-2 2-2h4c1 0 2 1 2 2v2"/><path d="M10 11v6"/><path d="M14 11v6"/></svg></div>
<div class="abs t" style="left:35.80px;top:538.75px;font-size:15px;line-height:20px;transform:scaleX(1.0508);transform-origin:0 50%;color:#0a0a0a;-webkit-text-stroke:0.25px #0a0a0a;">5103011505900010</div>
<div class="abs t" style="left:246.80px;top:538.75px;font-size:15px;line-height:20px;transform:scaleX(1.0205);transform-origin:0 50%;color:#0a0a0a;-webkit-text-stroke:0.25px #0a0a0a;">PTW001-KRTTP300525010</div>
<div class="abs t" style="left:498.60px;top:538.75px;font-size:15px;line-height:20px;letter-spacing:0.121px;color:#0a0a0a;-webkit-text-stroke:0.25px #0a0a0a;">Pinjaman Tanpa Agunan</div>
<div class="abs t" style="left:741.50px;top:538.75px;font-size:15px;line-height:20px;transform:scaleX(1.0767);transform-origin:0 50%;color:#0a0a0a;-webkit-text-stroke:0.25px #0a0a0a;">180.000.000</div>
<div class="abs bdg" style="left:914.1px;width:72.9px;top:537.00px;background:#dcfce7"></div>
<div class="abs t" style="left:925.20px;top:540.55px;font-size:13px;line-height:16px;letter-spacing:-0.219px;color:#22c55e;font-weight:700;">Diterima</div>
<div class="abs ab" style="left:1068.2px;top:529.95px"><svg class="ic " style="width:18px;height:18px;" viewBox="0 0 24 24" fill="none" stroke="currentColor" stroke-width="2" stroke-linecap="round" stroke-linejoin="round"><path d="M12 3H5a2 2 0 0 0-2 2v14a2 2 0 0 0 2 2h14a2 2 0 0 0 2-2v-7"/><path d="M18.375 2.625a2.121 2.121 0 1 1 3 3L12 15l-4 1 1-4Z"/></svg></div>
<div class="abs ab" style="left:1117.0px;top:529.95px"><svg class="ic " style="width:18px;height:18px;" viewBox="0 0 24 24" fill="none" stroke="currentColor" stroke-width="2" stroke-linecap="round" stroke-linejoin="round"><path d="M2 12s3-7 10-7 10 7 10 7-3 7-10 7-10-7-10-7Z"/><circle cx="12" cy="12" r="3"/></svg></div>
<div class="abs ab dis" style="left:1165.2px;top:529.95px;"><svg class="ic " style="width:18px;height:18px;" viewBox="0 0 24 24" fill="none" stroke="currentColor" stroke-width="2" stroke-linecap="round" stroke-linejoin="round"><path d="M3 6h18"/><path d="M19 6v14c0 1-1 2-2 2H7c-1 0-2-1-2-2V6"/><path d="M8 6V4c0-1 1-2 2-2h4c1 0 2 1 2 2v2"/><path d="M10 11v6"/><path d="M14 11v6"/></svg></div>
<div class="abs t" style="left:16.10px;top:600.00px;font-size:15px;line-height:20px;letter-spacing:0.136px;color:#0a0a0a;">Baris per halaman</div>
<div class="abs" style="left:150.3px;top:592.2px;width:75.200px;height:35.500px;border:1px solid #e5e7eb;border-radius:7px"></div>
<div class="abs t" style="left:162.50px;top:600.00px;font-size:15px;line-height:20px;transform:scaleX(0.9309);transform-origin:0 50%;color:#0a0a0a;">10</div>
<div class="abs" style="left:196.1px;top:601.5px;color:#8b93a3"><svg class="ic " style="width:17px;height:17px;" viewBox="0 0 24 24" fill="none" stroke="currentColor" stroke-width="1.8" stroke-linecap="round" stroke-linejoin="round"><path d="m6 9 6 6 6-6"/></svg></div>
<div class="abs t" style="left:556.30px;top:599.80px;font-size:15px;line-height:20px;transform:scaleX(0.9645);transform-origin:0 50%;color:#0a0a0a;">Halaman 1 dari 10</div>
<div class="abs pg" style="left:1005.4px;top:593px;color:#94a3b8"><svg class="ic " style="width:17px;height:17px;" viewBox="0 0 24 24" fill="none" stroke="currentColor" stroke-width="2" stroke-linecap="round" stroke-linejoin="round"><path d="m11 17-5-5 5-5"/><path d="m18 17-5-5 5-5"/></svg></div>
<div class="abs pg" style="left:1056.2px;top:593px;color:#94a3b8"><svg class="ic " style="width:17px;height:17px;" viewBox="0 0 24 24" fill="none" stroke="currentColor" stroke-width="2" stroke-linecap="round" stroke-linejoin="round"><path d="m15 18-6-6 6-6"/></svg></div>
<div class="abs pg" style="left:1106.8px;top:593px;color:#234e70"><svg class="ic " style="width:17px;height:17px;" viewBox="0 0 24 24" fill="none" stroke="currentColor" stroke-width="2" stroke-linecap="round" stroke-linejoin="round"><path d="m9 18 6-6-6-6"/></svg></div>
<div class="abs pg" style="left:1157.0px;top:593px;color:#234e70"><svg class="ic " style="width:17px;height:17px;" viewBox="0 0 24 24" fill="none" stroke="currentColor" stroke-width="2" stroke-linecap="round" stroke-linejoin="round"><path d="m6 17 5-5-5-5"/><path d="m13 17 5-5-5-5"/></svg></div>
</div>
<div class="abs topline"></div>
</div></body></html>
